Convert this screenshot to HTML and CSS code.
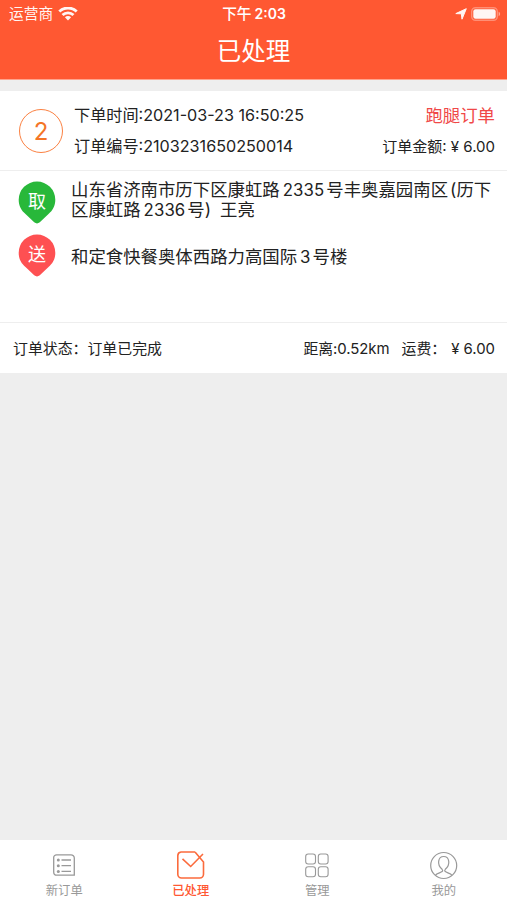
FILE: index.html
```html
<!DOCTYPE html>
<html lang="zh-CN">

<head>
    <meta charset="UTF-8" />
    <meta name="viewport" content="width=device-width, initial-scale=1" />
    <title>已处理</title>
    <link rel="stylesheet" href="styles.css">
</head>

<body>
    <header class="header">
        <div class="status-bar">
            <div class="carrier">
                <span>运营商</span>
                <svg width="20" height="15" viewBox="0 0 20 15">
                    <g fill="none" stroke="#fff" stroke-width="2.8">
                        <path d="M1.3 4.6a12.3 12.3 0 0 1 17.4 0" />
                        <path d="M4.5 8.1a7.8 7.8 0 0 1 11 0" />
                    </g>
                    <path d="M10 13.4l-3.1-3.1a4.4 4.4 0 0 1 6.2 0z" fill="#fff" />
                </svg>
            </div>
            <div class="time">下午<span class="num">2:03</span></div>
            <div class="indicators">
                <svg width="12" height="12" viewBox="0 0 12 12">
                    <path d="M11.3.7L7 11.2 6.3 5.8.8 5.6z" fill="#fff" stroke="#fff" stroke-width="1" stroke-linejoin="round" />
                </svg>
                <svg width="30" height="14" viewBox="0 0 30 14">
                    <rect x=".7" y=".7" width="25.6" height="12.6" rx="3.8" fill="none" stroke="#fff" stroke-opacity=".35" stroke-width="1.4" />
                    <rect x="2.3" y="2.2" width="22.4" height="9.6" rx="2.2" fill="#fff" />
                    <path d="M27.6 4.8c2 .7 2 3.7 0 4.4z" fill="#fff" fill-opacity=".5" />
                </svg>
            </div>
        </div>
        <h1>已处理</h1>
    </header>

    <main class="content">
        <section class="order">
            <div class="order-head">
                <div class="order-no">2</div>
                <div class="order-info">
                    <div class="row">
                        <span class="order-time">下单时间:2021-03-23 16:50:25</span>
                        <span class="order-type">跑腿订单</span>
                    </div>
                    <div class="row">
                        <span class="order-id">订单编号:2103231650250014</span>
                        <span class="amount">订单金额: ¥ 6.00</span>
                    </div>
                </div>
            </div>

            <div class="order-body">
                <div class="place">
                    <div class="pin">
                        <svg width="38" height="43" viewBox="0 0 38 43">
                            <path d="M19 .5A18.3 18.3 0 0 0 .7 18.8c0 6.2 2.6 10.7 6.800 14.2l8.7 8.3q2.8 2.2 5.6 0l8.7-8.3c4.2-3.5 6.800-8 6.800-14.2A18.3 18.3 0 0 0 19 .5z" fill="#28b83a" />
                        </svg>
                        <span>取</span>
                    </div>
                    <p class="from">山东省济南市历下区康虹路<span class="num">2335</span>号丰奥嘉园南区<span class="paren">(</span>历下<br>区康虹路<span class="num">2336</span>号<span class="paren-end">)</span>王亮</p>
                </div>
                <div class="place">
                    <div class="pin">
                        <svg width="38" height="43" viewBox="0 0 38 43">
                            <path d="M19 .5A18.3 18.3 0 0 0 .7 18.8c0 6.2 2.6 10.7 6.800 14.2l8.7 8.3q2.8 2.2 5.6 0l8.7-8.3c4.2-3.5 6.800-8 6.800-14.2A18.3 18.3 0 0 0 19 .5z" fill="#fe5052" />
                        </svg>
                        <span>送</span>
                    </div>
                    <p class="to">和定食快餐奥体西路力高国际<span class="num">3</span>号楼</p>
                </div>
            </div>

            <div class="order-foot">
                <span class="state">订单状态：订单已完成</span>
                <span class="distance">距离:0.52km</span>
                <span class="fee">运费：<span class="price">¥ 6.00</span></span>
            </div>
        </section>
    </main>

    <nav class="tabs">
        <a class="tab">
            <svg width="28" height="30" viewBox="0 0 28 30" fill="none" stroke="#999" stroke-width="1.3">
                <path d="M6.5 4.8H21a3.3 3.3 0 0 1 3.3 3.3V25.2H7a3.3 3.3 0 0 1-3.3-3.3V7.6a2.8 2.8 0 0 1 2.8-2.8z" />
                <path d="M11.5 10h9.5M11.5 15.7h9.5M11.5 21.4h9.5" />
                <g fill="#999" stroke="none">
                    <circle cx="8.3" cy="10" r="1.5" />
                    <circle cx="8.3" cy="15.7" r="1.5" />
                    <circle cx="8.3" cy="21.4" r="1.5" />
                </g>
            </svg>
            <span>新订单</span>
        </a>
        <a class="tab active">
            <svg width="28" height="30" viewBox="0 0 28 30" fill="none" stroke="#fb6b3d" stroke-width="1.6">
                <path d="M18 2H4A3.700 3.700 0 0 0 .8 5.700v18.600A3.700 3.700 0 0 0 4.500 28H22.800a3.700 3.700 0 0 0 3.700-3.700V12l-8.500-10" />
                <path d="M5.500 8.800l8.200 7.700L26 4" />
            </svg>
            <span>已处理</span>
        </a>
        <a class="tab">
            <svg width="28" height="30" viewBox="0 0 28 30" fill="none" stroke="#999" stroke-width="1.1">
                <rect x="2.7" y="4" width="9.8" height="10" rx="2.5" />
                <rect x="15.3" y="4" width="9.8" height="10" rx="2.5" />
                <rect x="2.7" y="16.8" width="9.8" height="10" rx="2.5" />
                <rect x="15.3" y="16.8" width="9.8" height="10" rx="2.5" />
            </svg>
            <span>管理</span>
        </a>
        <a class="tab">
            <svg width="28" height="30" viewBox="0 0 28 30" fill="none" stroke="#999" stroke-width="1.2">
                <circle cx="13.7" cy="15.5" r="13" />
                <path d="M5.4 25.3c1.3-2 5-2.4 6.8-3.7.8-.7.5-1.6-.1-2.3-2.6-2.300-3.900-5.300-3.400-8.200.4-3 2.500-4.600 5-4.600s4.600 1.600 5 4.600c.5 2.900-.8 5.900-3.400 8.200-.6.700-.9 1.600-.1 2.300 1.800 1.300 5.500 1.700 6.800 3.700" />
            </svg>
            <span>我的</span>
        </a>
    </nav>
</body>

</html>
```
FILE: styles.css
```css
* {
    box-sizing: border-box;
}

body {
    display: flex;
    flex-direction: column;
    height: 100vh;
    margin: 0;
    background-color: #eee;
    color: #222;
    font-family: Inter, "Noto Sans CJK SC", sans-serif;
    white-space: nowrap;
}

svg {
    display: block;
}

.header {
    height: 80px;
    background-color: #ff5832;
    border-bottom: 1px solid #ffa48e;
    color: #fff;
}

.status-bar {
    display: grid;
    grid-template-columns: 1fr auto 1fr;
    align-items: center;
    height: 27px;
    padding: 0 6px 0 9px;
    font-size: 14.7px;
    line-height: 27px;
}

.carrier,
.indicators {
    display: flex;
    align-items: center;
    gap: 5px;
    opacity: 0.95;
}

.indicators {
    justify-content: flex-end;
    gap: 4px;
}

.time {
    margin-right: 2px;
    font-weight: 500;
}

.time .num {
    margin-left: 3px;
    font-weight: 600;
    font-size: 14px;
}

h1 {
    margin: 5px 0 0;
    font-size: 24.5px;
    font-weight: 400;
    line-height: 38px;
    text-align: center;
}

.content {
    flex: 1;
    padding-top: 11px;
}

.order {
    background-color: #fff;
}

.order-head {
    display: flex;
    align-items: center;
    height: 80px;
    padding: 0 12px 0 19px;
    border-bottom: 1px solid #eee;
}

.order-no {
    width: 44px;
    height: 44px;
    border: 1.5px solid #fb8142;
    border-radius: 50%;
    color: #f47527;
    font-size: 24px;
    line-height: 43px;
    text-align: center;
}

.order-info {
    flex: 1;
    margin: -2px 0 0 11px;
}

.row {
    display: flex;
    justify-content: space-between;
    align-items: center;
    height: 31px;
    font-size: 16.15px;
}

.order-type {
    color: #f04848;
    font-size: 17.4px;
}

.amount {
    font-size: 15px;
}

.order-body {
    height: 152px;
    padding: 10px 0 0 18px;
    border-bottom: 1px solid #eee;
}

.place {
    display: flex;
    height: 43px;
    margin-bottom: 10px;
}

.pin {
    display: grid;
    width: 38px;
}

.pin svg,
.pin span {
    grid-area: 1 / 1;
}

.pin span {
    color: #fff;
    font-size: 18px;
    line-height: 42px;
    text-align: center;
}

.place p {
    margin: 0 0 0 15px;
    font-size: 17.4px;
    line-height: 20px;
}

.place .from {
    margin-top: -1px;
}

.place .to {
    margin-top: 13px;
}

.place .num {
    margin: 0 2px 0 3px;
    font-size: 16.8px;
    letter-spacing: 0.1px;
}

.paren {
    margin-left: 2px;
}

.paren-end {
    margin-right: 9px;
}

.order-foot {
    display: flex;
    align-items: center;
    height: 50px;
    padding: 0 12px 2px 13px;
    font-size: 14.9px;
}

.distance {
    margin-left: auto;
    letter-spacing: -0.05px;
}

.fee {
    margin-left: 12px;
}

.price {
    margin-left: 5px;
}

.tabs {
    display: grid;
    grid-template-columns: repeat(4, 1fr);
    height: 60px;
    padding-left: 1px;
    background-color: #fff;
}

.tab {
    display: flex;
    flex-direction: column;
    align-items: center;
    padding-top: 10px;
    color: #999;
    font-size: 12.3px;
    line-height: 22px;
}

.active {
    color: #ff5832;
    font-weight: 500;
}
```
